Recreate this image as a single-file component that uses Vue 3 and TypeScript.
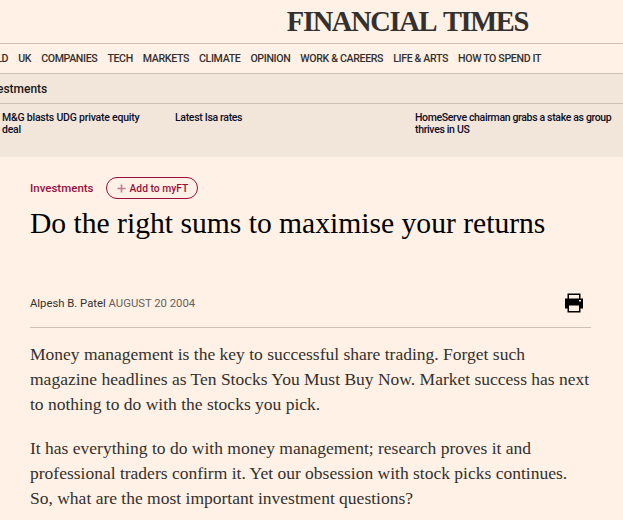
<script setup lang="ts">
const navItems: string[] = ['WORLD', 'UK', 'COMPANIES', 'TECH', 'MARKETS', 'CLIMATE', 'OPINION', 'WORK & CAREERS', 'LIFE & ARTS', 'HOW TO SPEND IT']
const related: { title: string; cls: string }[] = [
  { title: 'M&G blasts UDG private equity deal', cls: 'r1' },
  { title: 'Latest Isa rates', cls: 'r2' },
  { title: 'HomeServe chairman grabs a stake as group thrives in US', cls: 'r3' },
]
</script>

<template>
  <div class="page">
    <header class="masthead">FINANCIAL TIMES</header>
    <nav class="nav">
      <a v-for="item in navItems" :key="item" class="nav-item">{{ item }}</a>
    </nav>
    <section class="band">
      <div class="band-title"><span>Investments</span></div>
      <div class="band-links">
        <a v-for="r in related" :key="r.title" class="rel" :class="r.cls">{{ r.title }}</a>
      </div>
    </section>
    <main class="article">
      <div class="topic-row">
        <span class="topic">Investments</span>
        <button class="follow">
          <svg class="plus" width="9" height="9" viewBox="0 0 10 10"><path d="M5 0.500v9M0.500 5h9" stroke="#c47a94" stroke-width="1.800" fill="none" /></svg>
          Add to myFT
        </button>
      </div>
      <h1 class="headline">Do the right sums to maximise your returns</h1>
      <div class="byline-row">
        <div class="byline"><span class="author">Alpesh B. Patel</span> <span class="date">AUGUST 20 2004</span></div>
        <svg class="printer" width="20" height="20" viewBox="0 0 20 20">
          <path fill-rule="evenodd" fill="#000" d="M3.500 0.500h13v5h2.500v10h-2.500v4h-13v-4H1v-10h2.500zM5 2v3.500h10V2zM5 12.500V18h10v-5.500z" />
          <rect x="15" y="7" width="2" height="1.500" fill="#f2e5da" />
        </svg>
      </div>
      <p class="para">Money management is the key to successful share trading. Forget such magazine headlines as Ten Stocks You Must Buy Now. Market success has next to nothing to do with the stocks you pick.</p>
      <p class="para">It has everything to do with money management; research proves it and professional traders confirm it. Yet our obsession with stock picks continues. So, what are the most important investment questions?</p>
    </main>
  </div>
</template>

<style>
html, body { margin: 0; background: #fff1e5; }
</style>

<style scoped>
.page {
  width: 623px;
  height: 520px;
  overflow: hidden;
  background: #fff1e5;
  font-family: "Roboto", "Liberation Sans", sans-serif;
}
.masthead {
  height: 43px;
  box-sizing: border-box;
  padding: 5px 95px 0 0;
  text-align: right;
  font-family: "Liberation Serif", serif;
  font-size: 28.500px;
  line-height: 34px;
  font-weight: 700;
  letter-spacing: -1.350px;
  word-spacing: 3px;
  color: #33302e;
  white-space: nowrap;
}
.nav {
  display: flex;
  gap: 10px;
  height: 31px;
  box-sizing: border-box;
  align-items: center;
  border-top: 1px solid #ccc1b7;
  border-bottom: 1px solid #ccc1b7;
  margin-left: -26px;
  white-space: nowrap;
  font-size: 10.600px;
  font-weight: 500;
  letter-spacing: -0.350px;
  color: #33302e;
}
.band { background: #f2e5da; height: 83px; }
.band-title {
  height: 30px;
  box-sizing: border-box;
  border-bottom: 1px solid #ccc1b7;
  display: flex;
  align-items: center;
  margin-left: -19px;
  font-size: 12px;
  font-weight: 500;
  color: #1a1817;
}
.band-links {
  display: grid;
  grid-template-columns: 173px 240px 208px;
  padding: 8px 0 0 2px;
  font-size: 10.500px;
  font-weight: 500;
  letter-spacing: -0.220px;
  line-height: 12px;
  color: #0d0d26;
}
.rel { display: block; }
.r1 { width: 145px; }
.r2 { letter-spacing: -0.320px; }
.r3 { letter-spacing: -0.340px; }
.article { padding: 19px 32px 0 30px; }
.topic-row { display: flex; align-items: center; gap: 12px; height: 24px; }
.topic { font-size: 11.500px; font-weight: 500; color: #990f3d; }
.follow {
  display: inline-flex;
  align-items: center;
  gap: 4px;
  height: 22px;
  box-sizing: border-box;
  padding: 0 9px 0 10px;
  border: 1px solid #990f3d;
  border-radius: 11px;
  background: transparent;
  color: #990f3d;
  font-family: inherit;
  font-size: 10.300px;
  font-weight: 500;
}
.headline {
  margin: 6px 0 0;
  font-family: "Liberation Serif", serif;
  font-size: 29.600px;
  line-height: 34px;
  font-weight: 400;
  color: #000;
  white-space: nowrap;
}
.byline-row {
  margin-top: 46px;
  height: 42px;
  box-sizing: border-box;
  display: flex;
  justify-content: space-between;
  align-items: flex-start;
  border-bottom: 1px solid #ccc1b7;
  padding-right: 7px;
}
.byline { font-size: 11.300px; line-height: 16px; padding-top: 10px; color: #33302e; }
.date { color: #66605c; }
.printer { margin-top: 7px; }
.para {
  margin: 14px 0 0;
  font-family: "Liberation Serif", serif;
  font-size: 17.500px;
  line-height: 25px;
  color: #33302e;
  width: 561px;
}
.para + .para { margin-top: 19px; }
</style>
